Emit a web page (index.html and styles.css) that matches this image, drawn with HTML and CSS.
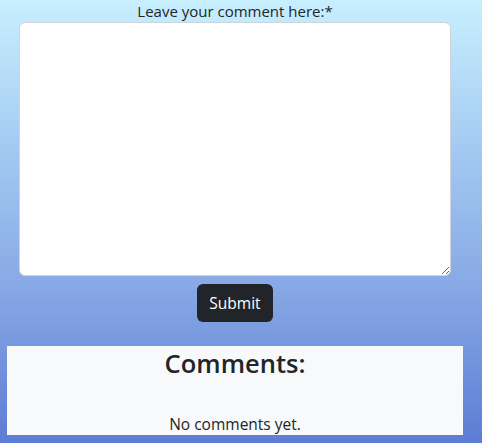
FILE: index.html
```html
<!DOCTYPE html>
<html lang="en">
<head>
<meta charset="utf-8">
<title>Comments</title>
<link rel="stylesheet" href="styles.css">
</head>
<body>
<main class="page">
  <form class="comment-form">
    <label class="label" for="comment">Leave your comment here:*</label>
    <textarea id="comment" class="textarea"></textarea>
    <button type="button" class="submit">Submit</button>
  </form>
  <section class="comments">
    <h2 class="comments-title">Comments:</h2>
    <p class="empty">No comments yet.</p>
  </section>
</main>
</body>
</html>
```

FILE: styles.css
```css
html, body {
  margin: 0;
  padding: 0;
  height: 100%;
}
body {
  background: linear-gradient(to bottom, #c8effe 0%, #a2c8f1 35%, #87a8e5 65%, #5d7cd4 100%);
  font-family: "Open Sans", "Noto Sans", sans-serif;
  color: #212529;
  font-size: 16px;
  line-height: 1.5;
}
.page {
  width: 456px;
  margin-left: 7px;
  display: flex;
  flex-direction: column;
  align-items: center;
}
.comment-form {
  display: flex;
  flex-direction: column;
  align-items: center;
  width: 100%;
}
.label {
  display: block;
  font-size: 15px;
  line-height: 22px;
  margin-top: 0;
}
.textarea {
  box-sizing: border-box;
  width: 432px;
  height: 254px;
  margin: 0;
  border: 1px solid #ced4da;
  border-radius: 6px;
  background: #fff;
  resize: both;
  display: block;
  font-family: inherit;
}
.submit {
  margin-top: 8px;
  width: 76px;
  height: 38px;
  border: none;
  border-radius: 6px;
  background: #212529;
  color: #fff;
  font-family: inherit;
  font-size: 15.5px;
  padding: 0;
}
.comments {
  margin-top: 24px;
  width: 456px;
  height: 89px;
  background: #f8f9fa;
  text-align: center;
  box-sizing: border-box;
}
.comments-title {
  margin: 0;
  font-size: 25.5px;
  font-weight: 600;
  line-height: 34px;
}
.empty {
  margin: 33px 0 0;
  font-size: 15.5px;
  line-height: 22px;
}
```
